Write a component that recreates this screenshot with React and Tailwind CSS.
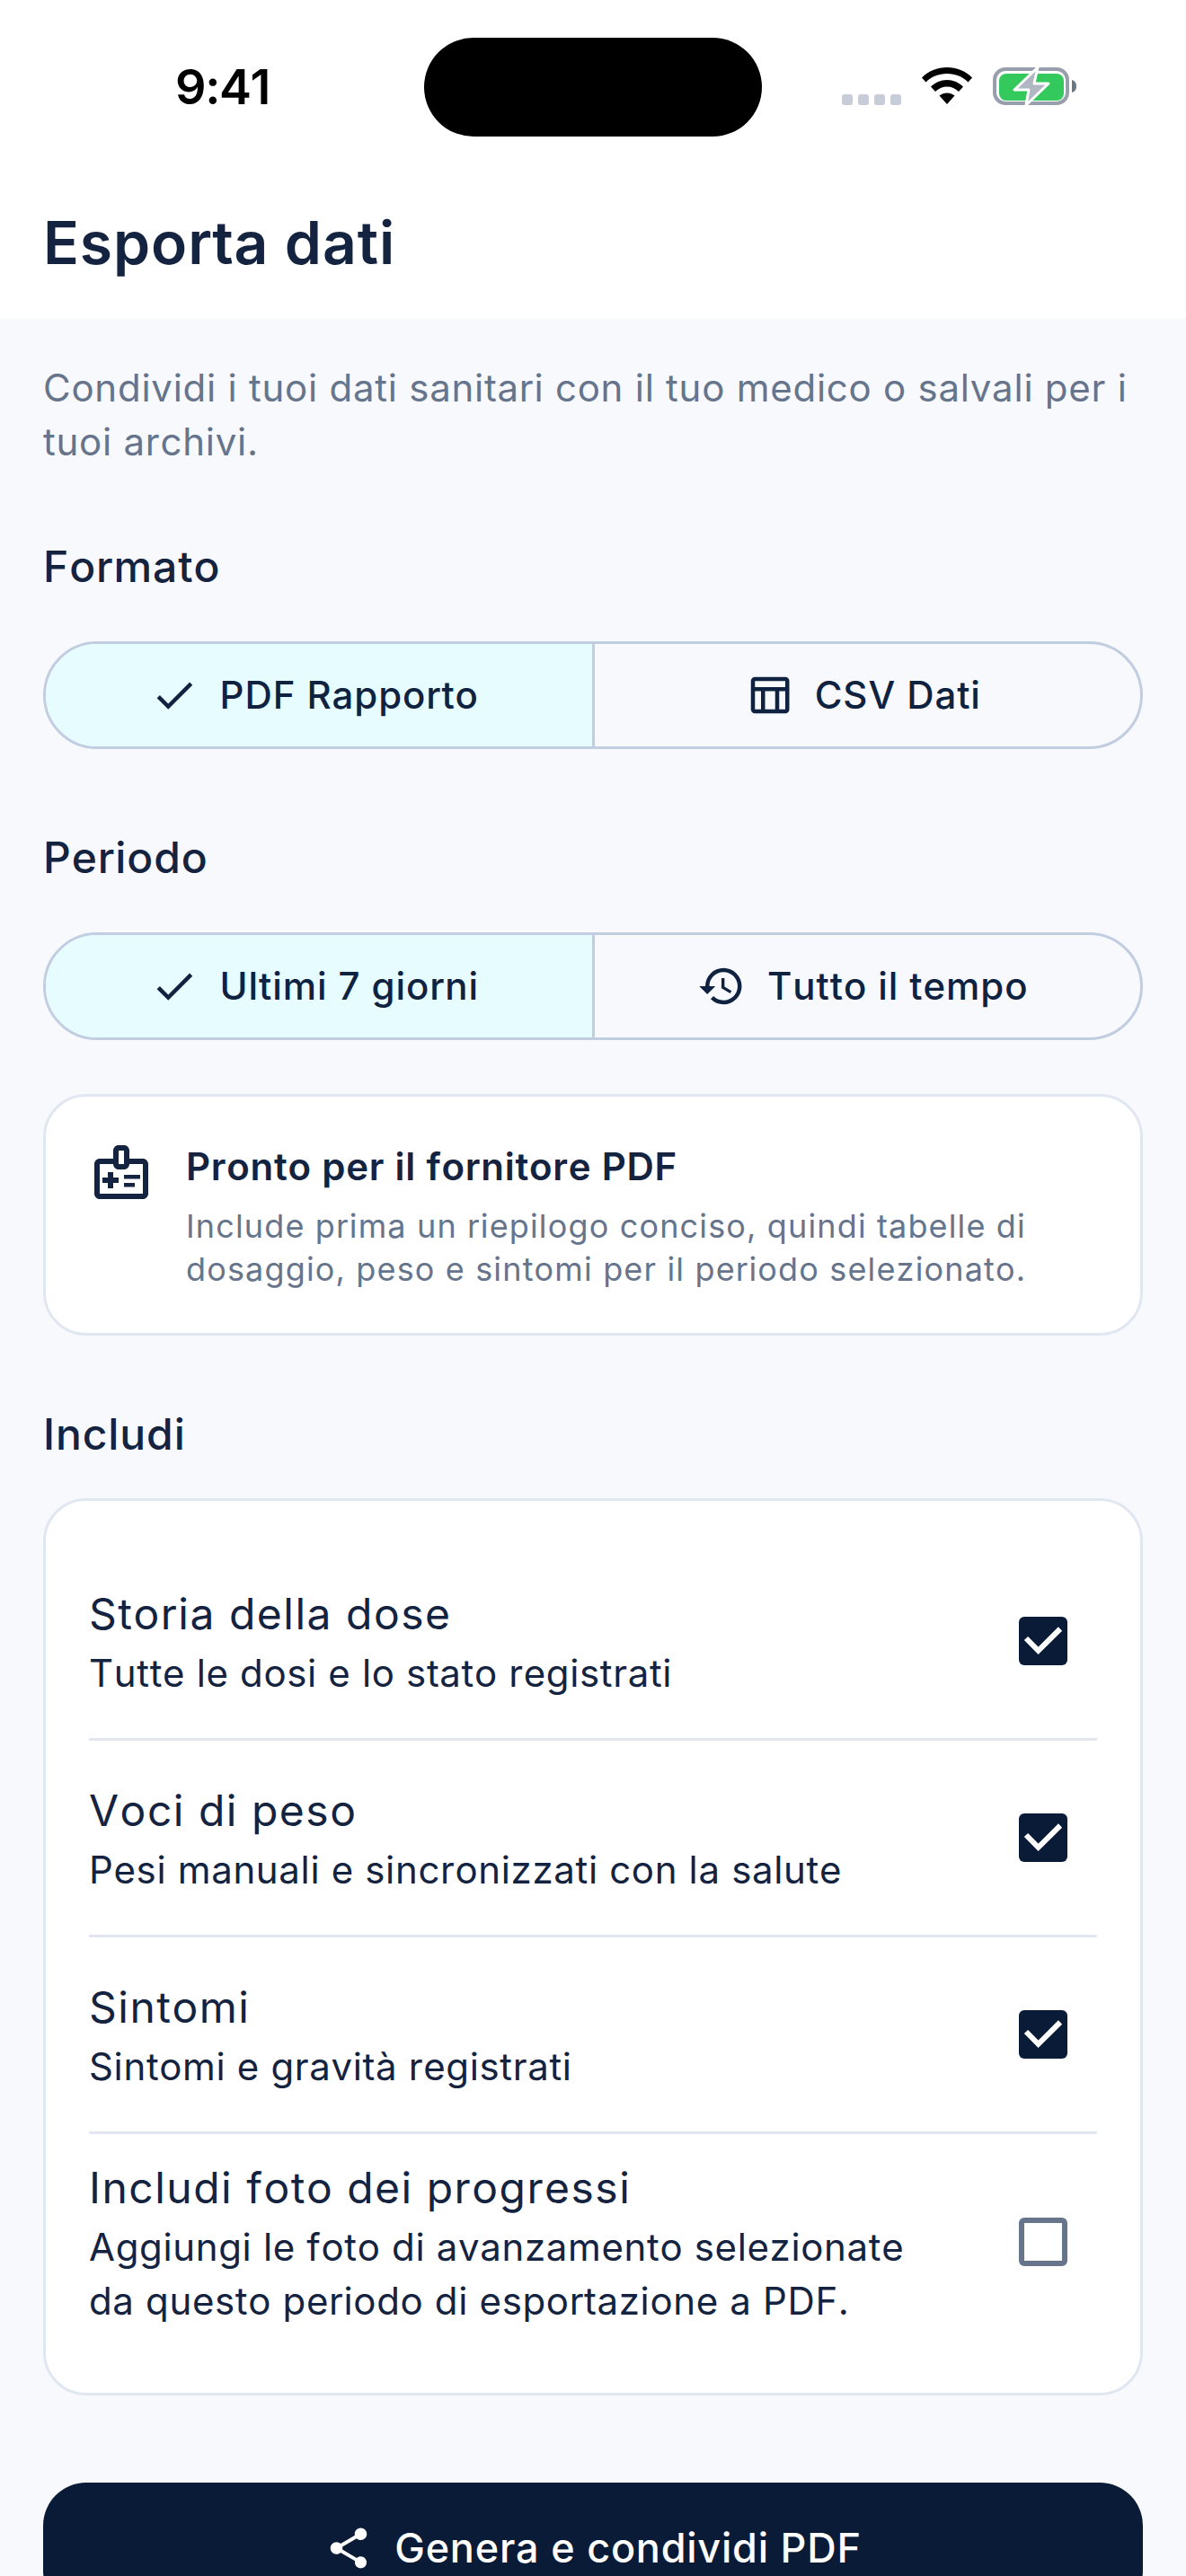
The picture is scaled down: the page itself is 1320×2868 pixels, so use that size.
import React from "react";
import {
  MdCheck,
  MdHistory,
  MdOutlineMedicalInformation,
  MdOutlineTableChart,
  MdShare,
} from "react-icons/md";

const rows = [
  { title: "Storia della dose", lines: ["Tutte le dosi e lo stato registrati"], checked: true },
  { title: "Voci di peso", lines: ["Pesi manuali e sincronizzati con la salute"], checked: true },
  { title: "Sintomi", lines: ["Sintomi e gravità registrati"], checked: true },
  {
    title: "Includi foto dei progressi",
    lines: ["Aggiungi le foto di avanzamento selezionate", "da questo periodo di esportazione a PDF."],
    checked: false,
  },
];

// Barra di stato con isola, wifi e batteria in carica
function StatusBar() {
  return (
    <div className="relative h-[186px] bg-white">
      <div className="absolute left-[472px] top-[42px] h-[110px] w-[376px] rounded-[55px] bg-black" />
      <span className="absolute left-[195px] top-[64px] text-[54px] leading-[66px] font-semibold tracking-[-1.4px] text-black">
        9:41
      </span>
      <div className="absolute left-[937px] top-[105px] flex gap-[6px]">
        <div className="size-[12px] rounded-[3px] bg-[#c6ccd8]" />
        <div className="size-[12px] rounded-[3px] bg-[#c6ccd8]" />
        <div className="size-[12px] rounded-[3px] bg-[#c6ccd8]" />
        <div className="size-[12px] rounded-[3px] bg-[#c6ccd8]" />
      </div>
      <svg className="absolute left-[1025px] top-[74px]" width="58" height="44" viewBox="0 0 58 44">
        <path d="M1 12.500C8.500 5 18 1 29 1s20.500 4 28 11.500l-4.500 5C46.500 11.500 38.500 8 29 8s-17.500 3.500-23.500 9.500z" fill="#000" />
        <path d="M11 22.500C15.500 18 22 15 29 15s13.500 3 18 7.500l-5 5.500C38.500 24.500 34 22.500 29 22.500s-9.500 2-13 5.500z" fill="#000" />
        <path d="M20.500 32.500C23 30.500 26 29.500 29 29.500s6 1 8.500 3L29 42z" fill="#000" />
      </svg>
      <svg className="absolute left-[1104px] top-[72px]" width="96" height="48" viewBox="0 0 96 48">
        <rect x="3" y="5" width="81" height="38" rx="12" fill="none" stroke="#989fac" strokeWidth="4" />
        <rect x="8" y="10" width="72" height="30" rx="8" fill="#34c95c" />
        <path d="M51 3L25 28H41L38 45L63 21H47z" fill="#b0b6c2" stroke="#fff" strokeWidth="3" strokeLinejoin="round" />
        <path d="M89 17c3.500 1 5 3.500 5 7s-1.500 6-5 7z" fill="#6b7588" />
      </svg>
    </div>
  );
}

function Segment({ icon, label, selected, first }) {
  return (
    <div
      className={`flex flex-1 items-center justify-center gap-[24px] pr-[10px] ${
        selected ? "bg-[#e6fcff]" : ""
      } ${first ? "border-r-[3px] border-[#c1cde0]" : ""}`}
    >
      {icon}
      <span className="text-[42px] leading-[60px] font-medium tracking-[0.9px] text-[#0f2240]">{label}</span>
    </div>
  );
}

function SegmentedRow({ left, right }) {
  return (
    <div className="flex h-[120px] overflow-hidden rounded-[60px] border-[3px] border-[#c1cde0]">
      <Segment first selected icon={<MdCheck className="size-[54px] text-[#0f2240]" />} label={left} />
      <Segment icon={right.icon} label={right.label} />
    </div>
  );
}

function SectionTitle({ children, className }) {
  return (
    <h2 className={`text-[48px] leading-[72px] font-medium tracking-[0.9px] text-[#14233f] ${className}`}>
      {children}
    </h2>
  );
}

function IncludeRow({ row, last }) {
  return (
    <div className={`flex items-center justify-between ${last ? "py-[24px]" : "border-b-[3px] border-[#e1e6f0] py-[42px]"}`}>
      <div className="min-w-0">
        <div className="text-[48px] leading-[72px] tracking-[1.5px] text-[#14233f]">{row.title}</div>
        {row.lines.map((line) => (
          <div key={line} className="text-[42px] leading-[60px] tracking-[0.65px] text-[#14233f]">
            {line}
          </div>
        ))}
      </div>
      <div className={`mr-[33px] flex size-[54px] items-center justify-center rounded-[6px] ${
        row.checked ? "bg-[#0a1b38]" : "border-[6px] border-[#66748c]"
      }`}>
        {row.checked && (
          <svg width="54" height="54" viewBox="0 0 54 54">
            <path d="M8 24L21.600 37.800L46 13.500" fill="none" stroke="#fff" strokeWidth="6" />
          </svg>
        )}
      </div>
    </div>
  );
}

export default function App() {
  return (
    <div className="h-[2868px] w-[1320px] overflow-hidden bg-[#f7f9fd] font-['Inter',sans-serif] [font-kerning:none]">
      <StatusBar />

      {/* App bar */}
      <header className="flex h-[168px] items-center bg-white px-[48px]">
        <h1 className="text-[66px] leading-[84px] font-semibold tracking-[0.9px] text-[#14233f]">Esporta dati</h1>
      </header>

      <main className="px-[48px] pt-[48px]">
        <p className="text-[42px] leading-[60px] tracking-[0.75px] text-[#66748c]">
          Condividi i tuoi dati sanitari con il tuo medico o salvali per i tuoi archivi.
        </p>

        <SectionTitle className="mt-[73px] mb-[47px]">Formato</SectionTitle>
        <SegmentedRow
          left="PDF Rapporto"
          right={{ icon: <MdOutlineTableChart className="size-[54px] text-[#0f2240]" />, label: "CSV Dati" }}
        />

        <SectionTitle className="mt-[85px] mb-[47px]">Periodo</SectionTitle>
        <SegmentedRow
          left="Ultimi 7 giorni"
          right={{ icon: <MdHistory className="size-[54px] text-[#0f2240]" />, label: "Tutto il tempo" }}
        />

        {/* Riepilogo fornitore */}
        <section className="mt-[60px] flex gap-[36px] rounded-[48px] border-[3px] border-[#e1e7f1] bg-white p-[48px] pb-[47px]">
          <MdOutlineMedicalInformation className="size-[72px] shrink-0 text-[#14233f]" />
          <div>
            <div className="text-[42px] leading-[60px] font-semibold tracking-[0.75px] text-[#14233f]">
              Pronto per il fornitore PDF
            </div>
            <div className="mt-[12px] text-[36px] leading-[48px] tracking-[1.15px] text-[#66748c]">
              Include prima un riepilogo conciso, quindi tabelle di
              <br />
              dosaggio, peso e sintomi per il periodo selezionato.
            </div>
          </div>
        </section>

        <SectionTitle className="mt-[74px] mb-[35px]">Includi</SectionTitle>
        <section className="rounded-[48px] border-[3px] border-[#e1e7f1] bg-white px-[48px] py-[48px]">
          {rows.map((row, i) => (
            <IncludeRow key={row.title} row={row} last={i === rows.length - 1} />
          ))}
        </section>

        <button className="mt-[97px] flex h-[146px] w-full items-center justify-center gap-[24px] rounded-[48px] bg-[#0a1b38] text-[45px] leading-[72px] font-medium tracking-[0.77px] text-white">
          <MdShare className="size-[54px]" />
          Genera e condividi PDF
        </button>
      </main>
    </div>
  );
}
